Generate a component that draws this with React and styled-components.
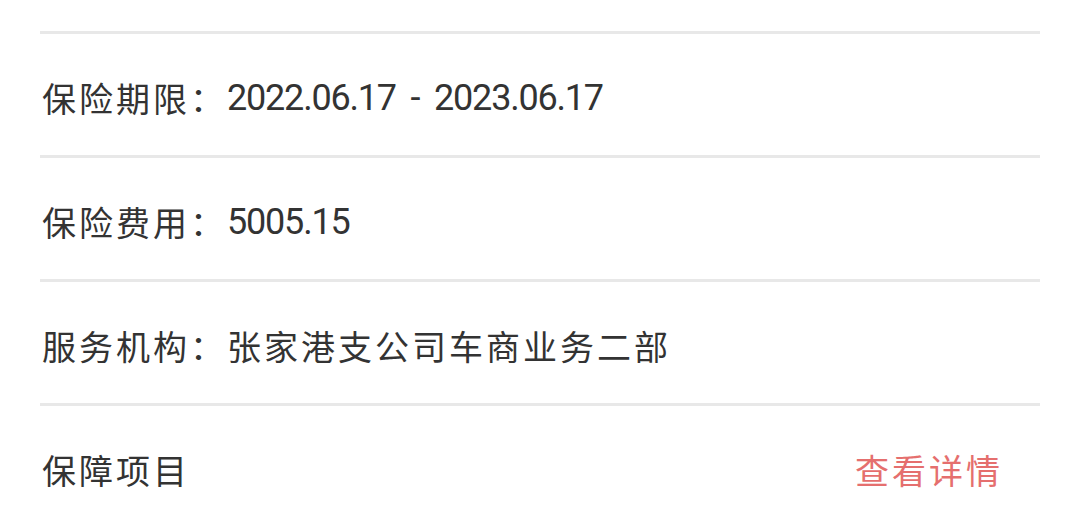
import React from 'react';
import styled, { createGlobalStyle } from 'styled-components';

const GlobalStyle = createGlobalStyle`
    html, body {
        margin: 0;
        padding: 0;
        background-color: #fff;
    }
`

const Panel = styled.div`
    width: 1080px;
    box-sizing: border-box;
    padding: 31px 40px 0 40px;
    background-color: #fff;
`

const Row = styled.div`
    display: flex;
    align-items: center;
    justify-content: space-between;
    height: 124px;
    box-sizing: border-box;
    border-top: 3px solid #e8e8e8;
    padding: 6px 37px 0 2px;
`

const Field = styled.div`
    display: flex;
    align-items: center;
    color: #333;
`

const Label = styled.span`
    font-family: "Noto Sans CJK SC", sans-serif;
    font-size: 34px;
    letter-spacing: 3px;
    color: #333;
`

const Value = styled.span`
    font-family: ${p => (p.cjk ? '"Noto Sans CJK SC", sans-serif' : 'Roboto, "Noto Sans CJK SC", sans-serif')};
    font-size: ${p => (p.cjk ? '34px' : '36px')};
    letter-spacing: ${p => (p.cjk ? '3px' : '-1.2px')};
    word-spacing: 7px;
    color: #333;
    white-space: pre;
`

const Link = styled.span`
    font-family: "Noto Sans CJK SC", sans-serif;
    font-size: 34px;
    letter-spacing: 3px;
    color: #e56f6e;
    cursor: pointer;
`

const rows = [
    { label: '保险期限：', value: '2022.06.17 - 2023.06.17' },
    { label: '保险费用：', value: '5005.15' },
    { label: '服务机构：', value: '张家港支公司车商业务二部', cjk: true },
]

export default function App() {
    return (
        <>
            <GlobalStyle />
            <Panel>
                {rows.map(item =>
                    <Row key={item.label}>
                        <Field>
                            <Label>{item.label}</Label>
                            <Value cjk={item.cjk}>{item.value}</Value>
                        </Field>
                    </Row>
                )}
                <Row>
                    <Field>
                        <Label>保障项目</Label>
                    </Field>
                    <Link>查看详情</Link>
                </Row>
            </Panel>
        </>
    )
}
